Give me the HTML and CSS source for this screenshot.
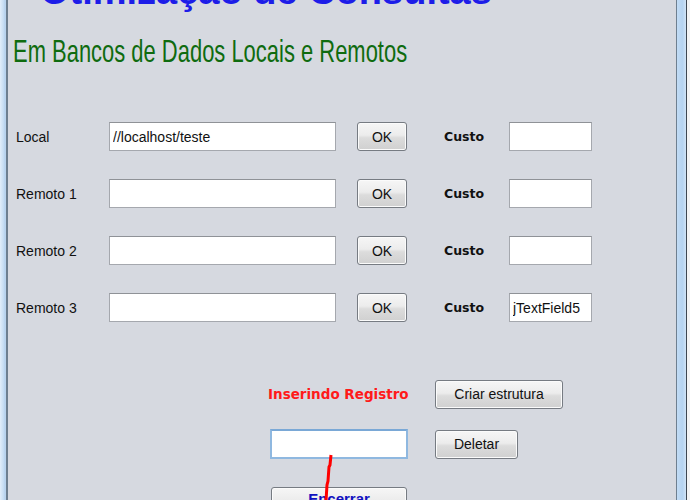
FILE: index.html
```html
<!DOCTYPE html>
<html lang="pt">
<head>
<meta charset="utf-8">
<title>Otimização de Consultas</title>
<link rel="stylesheet" href="styles.css">
</head>
<body>
<div class="window">
  <div class="frame-left"></div>
  <main class="content">
    <h1 class="title">Otimização de Consultas</h1>
    <h2 class="subtitle">Em Bancos de Dados Locais e Remotos</h2>
    <section class="rows">
      <span class="lbl">Local</span>
      <input class="field" type="text" value="//localhost/teste">
      <button class="btn ok">OK</button>
      <span class="custo">Custo</span>
      <input class="field cost" type="text" value="">

      <span class="lbl">Remoto 1</span>
      <input class="field" type="text" value="">
      <button class="btn ok">OK</button>
      <span class="custo">Custo</span>
      <input class="field cost" type="text" value="">

      <span class="lbl">Remoto 2</span>
      <input class="field" type="text" value="">
      <button class="btn ok">OK</button>
      <span class="custo">Custo</span>
      <input class="field cost" type="text" value="">

      <span class="lbl">Remoto 3</span>
      <input class="field" type="text" value="">
      <button class="btn ok">OK</button>
      <span class="custo">Custo</span>
      <input class="field cost" type="text" value="jTextField5">
    </section>
    <section class="actions">
      <span class="status">Inserindo Registro</span>
      <button class="btn criar">Criar estrutura</button>
      <input class="field focus" type="text" value="">
      <button class="btn deletar">Deletar</button>
      <button class="btn encerrar">Encerrar</button>
    </section>
    <svg class="scribble" width="20" height="60" viewBox="0 0 20 60">
      <polyline points="14,2 13,12 12,14 11,28 10,32 9,48 9,58" fill="none" stroke="#f00" stroke-width="3"/>
    </svg>
  </main>
  <div class="frame-right"></div>
  <div class="outside"></div>
</div>
</body>
</html>
```
FILE: styles.css
```css
* { box-sizing: border-box; }
html, body { margin: 0; padding: 0; }
body {
  width: 690px;
  height: 500px;
  overflow: hidden;
  background: #f0f0f0;
  font-family: "Liberation Sans", Arial, sans-serif;
}
.window {
  display: flex;
  height: 500px;
}
.frame-left {
  width: 8px;
  background: linear-gradient(90deg, #e2eefa 0%, #c6ddf3 60%, #b9d3ee 80%);
  border-right: 2px solid #6e7f90;
}
.frame-right {
  width: 11px;
  background: linear-gradient(90deg, #c2dcf5 0%, #b5d3f1 60%, #cfe3f7 100%);
  border-left: 1px solid #6e7f90;
  border-right: 1px solid #3d4752;
}
.outside {
  width: 3px;
  background: #f2f3f5;
}
.content {
  position: relative;
  flex: 1;
  background: #d6d9e0;
  padding-left: 8px;
  overflow: hidden;
}
.title {
  margin: -30px 0 0 24px;
  font-size: 38px;
  line-height: 42px;
  font-weight: bold;
  color: #1d1de8;
  white-space: nowrap;
}
.subtitle {
  margin: 21px 0 0 -3px;
  font-family: "Liberation Sans", Arial, sans-serif;
  font-weight: normal;
  font-size: 32px;
  line-height: 36px;
  color: #0f6b0f;
  white-space: nowrap;
  transform: scaleX(0.686);
  transform-origin: left center;
}
.rows {
  display: grid;
  grid-template-columns: 93px 227px 71px 37px 65px 83px;
  grid-auto-rows: 29px;
  row-gap: 28px;
  margin: 53px 0 0 0;
  align-items: center;
}
.rows .btn.ok { grid-column: 3; margin-left: 21px; width: 50px; }
.rows .custo { grid-column: 5; }
.lbl {
  font-size: 14px;
  color: #111;
}
.custo {
  font-family: "DejaVu Sans", sans-serif;
  font-weight: bold;
  font-size: 12.5px;
  color: #111;
}
.field {
  height: 29px;
  width: 100%;
  margin: 0;
  padding: 0 3px;
  border: 1px solid #a5a8ae;
  border-top-color: #8f9297;
  background: #fff;
  font-family: "Liberation Sans", Arial, sans-serif;
  font-size: 14px;
  color: #111;
  outline: none;
}
.btn {
  height: 29px;
  margin: 0;
  padding: 0;
  border: 1px solid #767b82;
  border-radius: 3px;
  background: linear-gradient(180deg, #f6f6f6 0%, #ececec 45%, #dcdcdc 55%, #d0d0d0 100%);
  box-shadow: inset 0 0 0 1px #fbfbfb;
  font-family: "Liberation Sans", Arial, sans-serif;
  font-size: 14px;
  color: #111;
}
.actions {
  display: grid;
  grid-template-columns: 140px 27px auto;
  grid-auto-rows: 30px;
  row-gap: 20px;
  margin: 57px 0 0 252px;
  align-items: center;
}
.status {
  grid-column: 1;
  text-align: right;
  font-family: "DejaVu Sans", sans-serif;
  font-weight: bold;
  font-size: 13.5px;
  color: #ff1a1a;
  white-space: nowrap;
}
.criar { grid-column: 3; width: 128px; }
.field.focus {
  grid-column: 1;
  width: 138px;
  height: 30px;
  margin-left: 2px;
  border: 2px solid #8fb8e0;
  border-top-color: #7aa8d6;
}
.deletar { grid-column: 3; width: 83px; }
.encerrar {
  grid-column: 1;
  width: 136px;
  margin: 7px 0 -7px 3px;
  padding-bottom: 6px;
  font-weight: bold;
  font-size: 15px;
  color: #1010c0;
}
.scribble {
  position: absolute;
  left: 309px;
  top: 453px;
}
```
